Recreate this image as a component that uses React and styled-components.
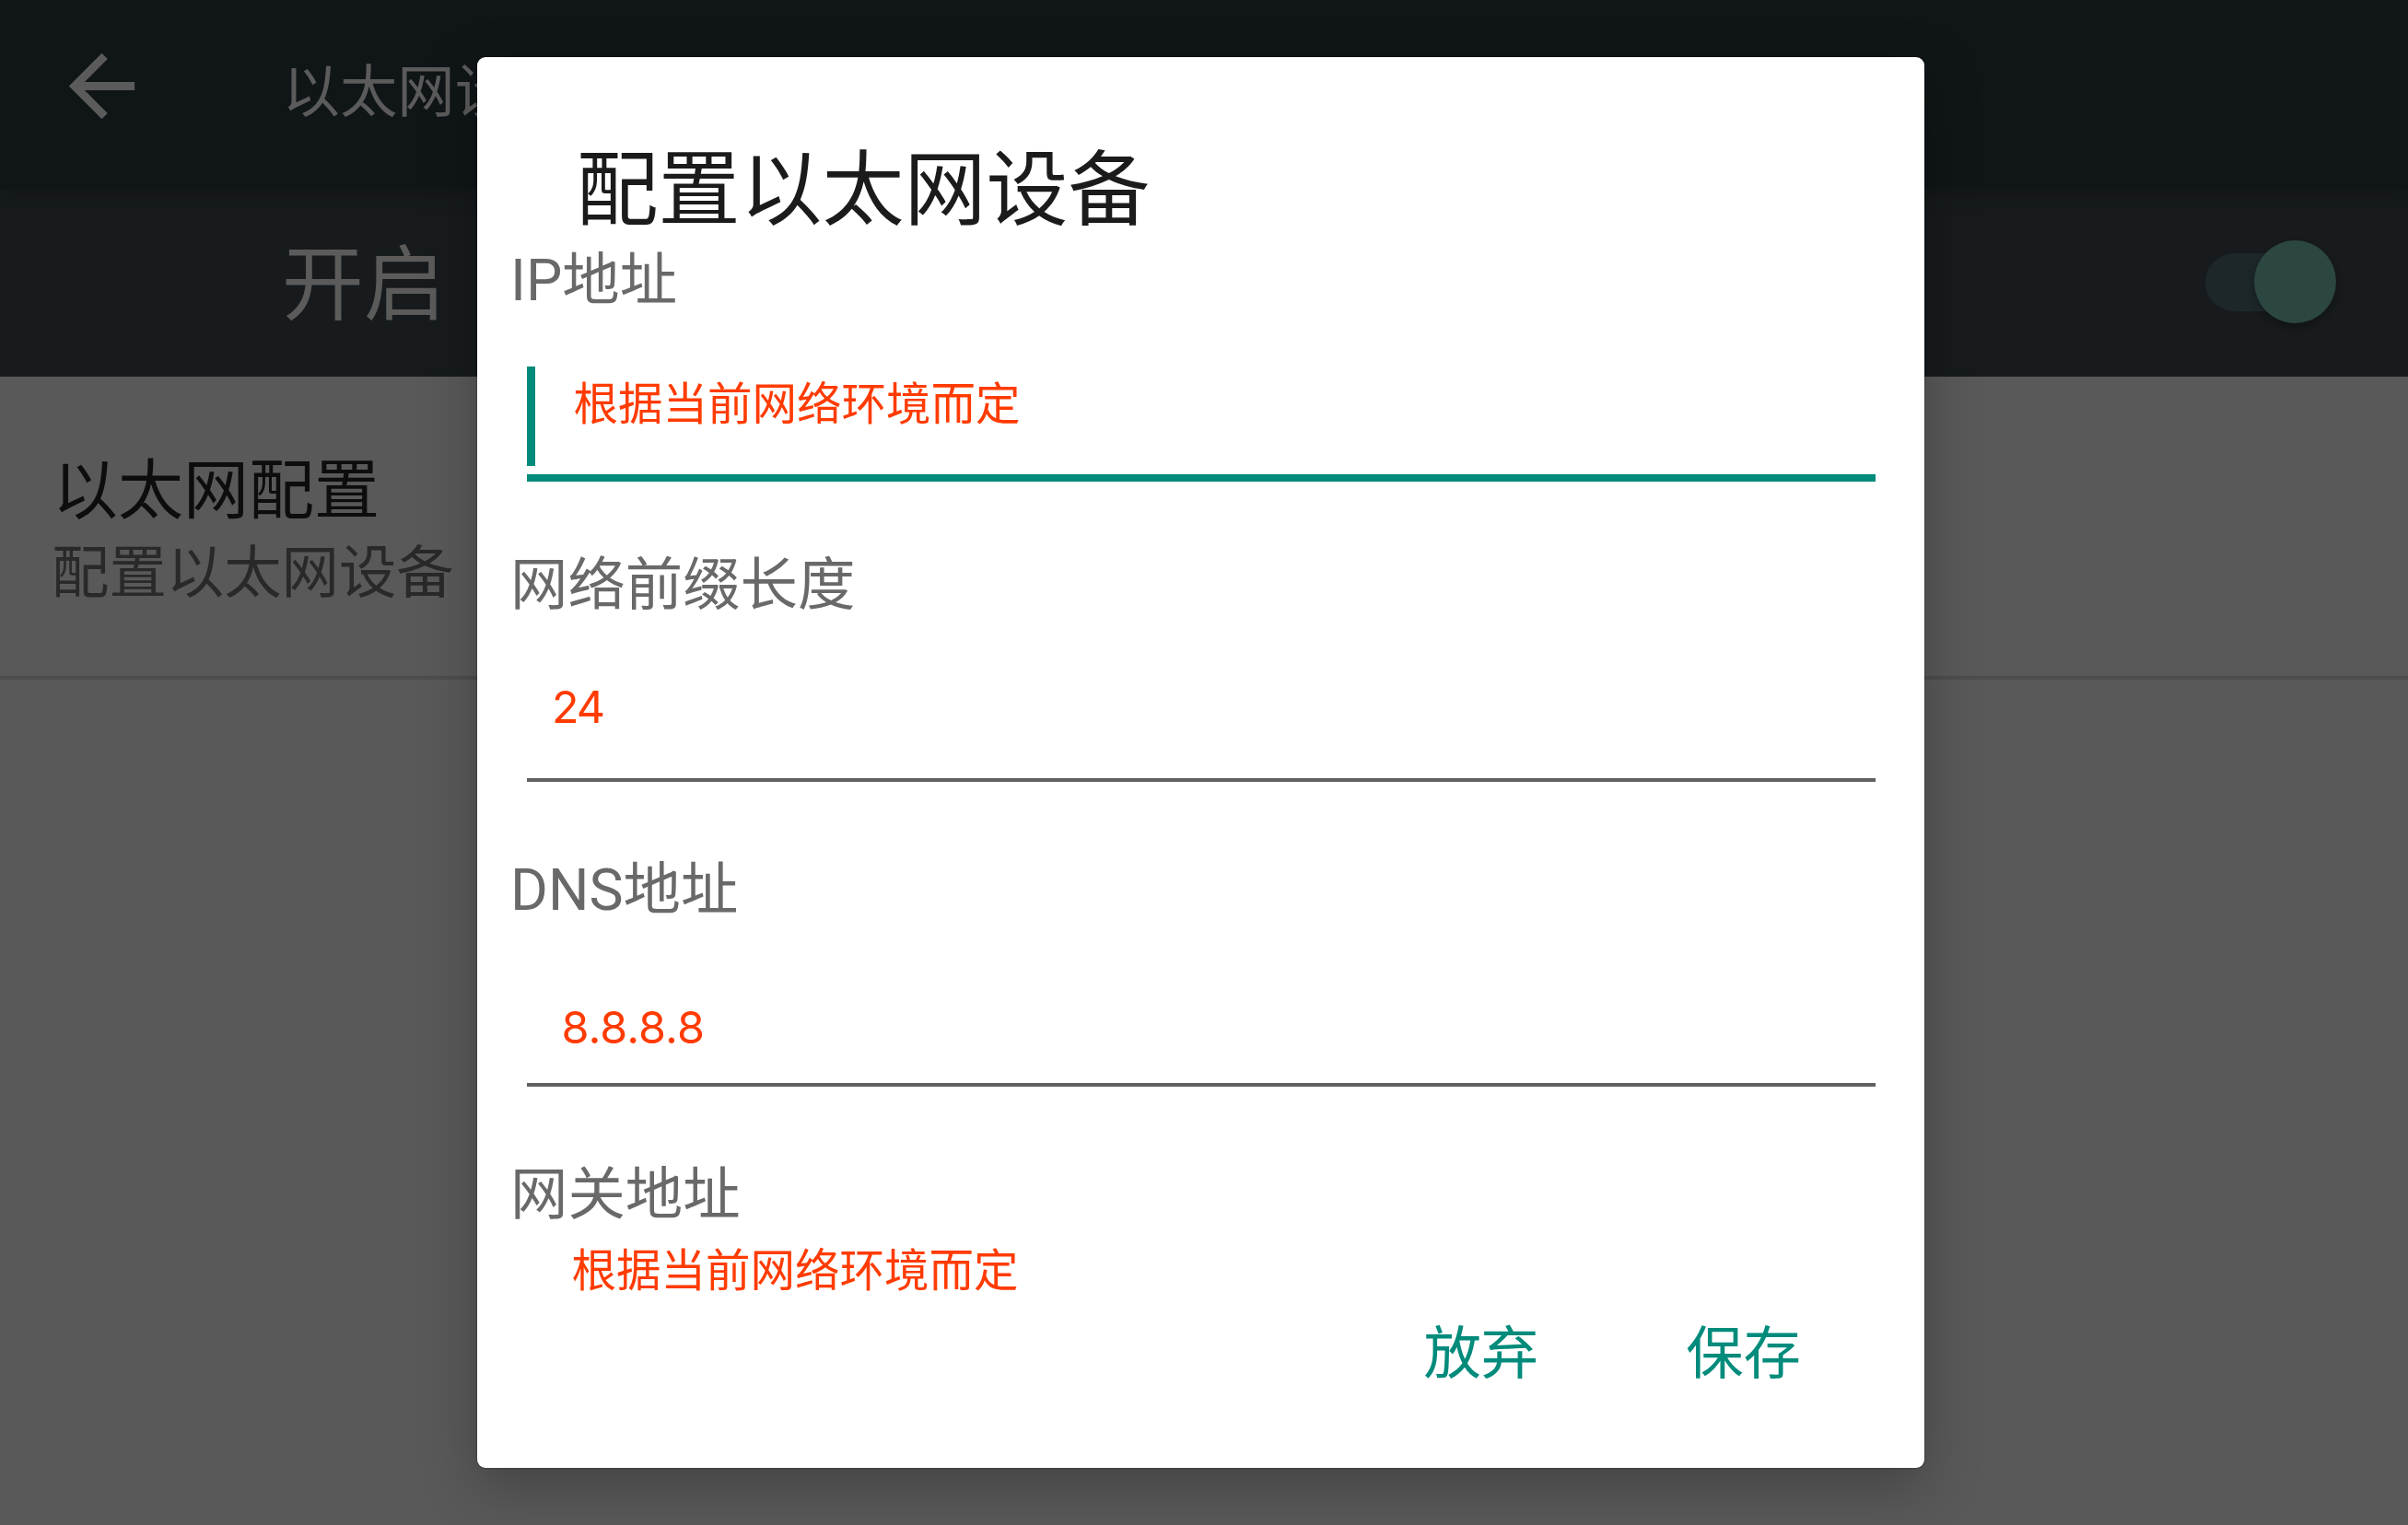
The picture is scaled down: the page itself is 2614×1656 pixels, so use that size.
import React from 'react';
import styled, { createGlobalStyle, ThemeProvider } from 'styled-components';

const theme = {
  colors: {
    appBar: '#101517',
    switchBar: '#171b1d',
    page: '#595959',
    divider: '#4d4d4d',
    onDark: '#5b5b5b',
    itemTitle: '#0d0d0d',
    itemSummary: '#292929',
    thumb: '#2c4641',
    track: '#1d2729',
    accent: '#008b7b',
    hint: '#ff3b00',
    title: '#1b1b1b',
    label: '#696969',
    underline: '#616161',
  },
  fonts: {
    ui: "Roboto, 'Noto Sans CJK SC', sans-serif",
    hint: "Inter, 'Noto Sans CJK SC', sans-serif",
  },
};

const GlobalStyle = createGlobalStyle`
  * {
    box-sizing: border-box;
  }

  body {
    margin: 0;
    background: #595959;
  }
`;

const Screen = styled.div`
  position: relative;
  width: 2614px;
  height: 1656px;
  overflow: hidden;
  background: ${({ theme }) => theme.colors.page};
  font-family: ${({ theme }) => theme.fonts.ui};
`;

const AppBar = styled.header`
  position: relative;
  display: flex;
  align-items: center;
  height: 205px;
  padding: 0 0 19px 56.5px;
  background: ${({ theme }) => theme.colors.appBar};
  box-shadow: 0 5px 14px rgba(16, 21, 23, 0.7);
`;

const BackIcon = styled.svg`
  width: 107px;
  height: 107px;
  fill: ${({ theme }) => theme.colors.onDark};
`;

const AppTitle = styled.h1`
  margin: 15px 0 0 143px;
  font-size: 62.4px;
  font-weight: 400;
  line-height: 80px;
  color: ${({ theme }) => theme.colors.onDark};
`;

const SwitchBar = styled.div`
  display: flex;
  justify-content: space-between;
  align-items: center;
  height: 204px;
  padding: 0 78.5px 0 306px;
  background: ${({ theme }) => theme.colors.switchBar};
`;

const SwitchLabel = styled.span`
  padding-top: 6px;
  font-size: 88.8px;
  line-height: 110px;
  color: ${({ theme }) => theme.colors.onDark};
`;

const Track = styled.span`
  display: flex;
  justify-content: flex-end;
  align-items: center;
  width: 128px;
  height: 63px;
  margin: -2px 14px 0 0;
  border-radius: 32px;
  background: ${({ theme }) => theme.colors.track};
`;

const Thumb = styled.span`
  flex: none;
  width: 89px;
  height: 90px;
  margin-right: -14px;
  border-radius: 50%;
  background: ${({ theme }) => theme.colors.thumb};
  box-shadow: 0 4px 8px rgba(0, 0, 0, 0.3);
`;

const ListItem = styled.section`
  height: 329px;
  padding: 79px 0 0 57px;
  border-bottom: 4px solid ${({ theme }) => theme.colors.divider};
`;

const ItemTitle = styled.h2`
  margin: 0;
  font-size: 71px;
  font-weight: 400;
  line-height: 90px;
  color: ${({ theme }) => theme.colors.itemTitle};
`;

const ItemSummary = styled.p`
  margin: 0 0 0 -1px;
  font-size: 62.4px;
  line-height: 90px;
  color: ${({ theme }) => theme.colors.itemSummary};
`;

const DialogBox = styled.div`
  position: absolute;
  top: 62px;
  left: 518px;
  display: flex;
  flex-direction: column;
  width: 1571px;
  height: 1532px;
  padding-top: 90px;
  border-radius: 9px;
  background: #fff;
  box-shadow: 0 20px 60px rgba(0, 0, 0, 0.25), 0 0 2px rgba(0, 0, 0, 0.6);
`;

const DialogTitle = styled.h2`
  margin: 0 0 3px 107.5px;
  font-size: 89px;
  font-weight: 400;
  line-height: 110px;
  color: ${({ theme }) => theme.colors.title};
`;

const Fields = styled.div`
  height: 1160px;
  overflow: hidden;
`;

const Field = styled.div`
  height: 331px;
`;

const Label = styled.label`
  display: block;
  padding-left: 36px;
  font-size: 62.4px;
  line-height: 80px;
  color: ${({ theme }) => theme.colors.label};
`;

const Input = styled.div`
  display: flex;
  width: 1464px;
  margin-left: 53.5px;
  padding-top: ${({ $top }) => $top}px;
  height: ${({ $focused }) => ($focused ? 178 : 173)}px;
  border-bottom: ${({ theme, $focused }) =>
    $focused ? `8px solid ${theme.colors.accent}` : `4px solid ${theme.colors.underline}`};
`;

const Caret = styled.span`
  width: 9px;
  height: 108px;
  margin-right: -9px;
  background: ${({ theme }) => theme.colors.accent};
`;

const Value = styled.span`
  margin-left: ${({ $indent }) => $indent}px;
  padding-top: ${({ $drop }) => $drop || 0}px;
  font-family: ${({ theme }) => theme.fonts.hint};
  font-size: 48.5px;
  line-height: 60px;
  letter-spacing: ${({ $spacing }) => $spacing || 0}px;
  white-space: nowrap;
  color: ${({ theme }) => theme.colors.hint};
`;

const Actions = styled.div`
  display: flex;
  justify-content: flex-end;
  gap: 160px;
  padding: 6px 134px 0 0;
`;

const Button = styled.button`
  padding: 0;
  border: 0;
  background: none;
  font-family: inherit;
  font-size: 62.4px;
  line-height: 80px;
  color: ${({ theme }) => theme.colors.accent};
`;

const fields = [
  { label: 'IP地址', value: '根据当前网络环境而定', focused: true, top: 53, indent: 51, drop: 11 },
  { label: '网络前缀长度', value: '24', top: 62, indent: 27.5, spacing: -2 },
  { label: 'DNS地址', value: '8.8.8.8', top: 79, indent: 38 },
  { label: '网关地址', value: '根据当前网络环境而定', top: 12, indent: 49 },
];

function ConfigDialog() {
  return (
    <DialogBox role="dialog" aria-labelledby="dialog-title">
      <DialogTitle id="dialog-title">配置以太网设备</DialogTitle>
      <Fields>
        {fields.map(({ label, value, focused, top, indent, drop, spacing }) => (
          <Field key={label}>
            <Label>{label}</Label>
            <Input $focused={focused} $top={top}>
              {focused && <Caret />}
              <Value $indent={indent} $drop={drop} $spacing={spacing}>
                {value}
              </Value>
            </Input>
          </Field>
        ))}
      </Fields>
      <Actions>
        <Button type="button">放弃</Button>
        <Button type="button">保存</Button>
      </Actions>
    </DialogBox>
  );
}

function App() {
  return (
    <ThemeProvider theme={theme}>
      <GlobalStyle />
      <Screen>
        <AppBar>
          <BackIcon viewBox="0 0 24 24" aria-hidden="true">
            <path d="M20 11H7.83l5.59-5.59L12 4l-8 8 8 8 1.41-1.41L7.83 13H20v-2z" />
          </BackIcon>
          <AppTitle>以太网设备</AppTitle>
        </AppBar>
        <SwitchBar>
          <SwitchLabel>开启</SwitchLabel>
          <Track>
            <Thumb />
          </Track>
        </SwitchBar>
        <ListItem>
          <ItemTitle>以太网配置</ItemTitle>
          <ItemSummary>配置以太网设备</ItemSummary>
        </ListItem>
        <ConfigDialog />
      </Screen>
    </ThemeProvider>
  );
}

export default App;
